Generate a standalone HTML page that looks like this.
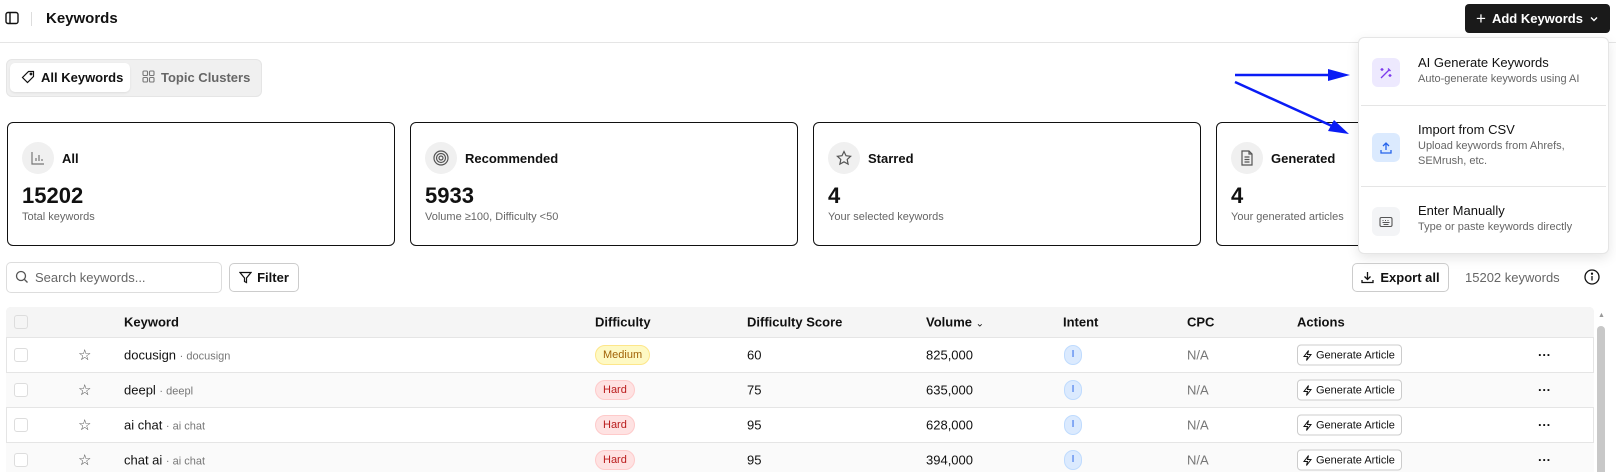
<!DOCTYPE html>
<html style="width:1616px;height:472px;overflow:hidden"><head><meta charset="utf-8"><style>
*{box-sizing:border-box;margin:0;padding:0}
body{width:1616px;height:472px;overflow:hidden;background:#fff;font-family:"Liberation Sans",sans-serif;color:#111;position:relative}
.a{position:absolute}
.card{position:absolute;top:122px;width:388px;height:124px;border:1px solid #111;border-radius:6px;background:#fff}
.card .ic{position:absolute;left:14px;top:19px;width:32px;height:32px;border-radius:50%;background:#f0f0f0;display:flex;align-items:center;justify-content:center}
.card .t{position:absolute;left:54px;top:28px;font-size:13px;font-weight:bold}
.card .n{position:absolute;left:14px;top:60px;font-size:22px;font-weight:bold}
.card .s{position:absolute;left:14px;top:88px;font-size:11px;color:#666}
.row{position:absolute;left:6px;width:1588px;height:35px;border-bottom:1px solid #e5e5e5;font-size:13px}
.row>*{position:absolute;top:50%;transform:translateY(-50%)}
.cb{left:8px;width:14px;height:14px;border:1px solid #ddd;border-radius:3px;background:#fff}
.badge{font-size:11px;padding:3px 7px;border-radius:10px;border:1px solid}
.med{background:#fef9c3;border-color:#fde68a;color:#a16207}
.hard{background:#fee2e2;border-color:#fecaca;color:#b91c1c}
.int{width:18px;height:20px;border-radius:9px;background:#dbeafe;border:1px solid #bfdbfe;color:#2563eb;font-size:10px;text-align:center;line-height:18px}
.ga{height:21px;border:1px solid #ccc;border-radius:4px;font-size:11px;padding:0 6px 0 4px;display:flex;align-items:center;gap:3px;background:#fff}
.dd-i{position:absolute;left:13px;width:28px;height:29px;border-radius:6px;display:flex;align-items:center;justify-content:center}
.dd-t{position:absolute;left:59px;font-size:13px;font-weight:500;color:#111}
.dd-s{position:absolute;left:59px;font-size:11px;color:#666;line-height:15px}
</style></head><body>
<svg class="a" style="left:5px;top:11px" width="14" height="14" viewBox="0 0 14 14" fill="none" stroke="#111" stroke-width="1.4"><rect x="1" y="1.5" width="12" height="11" rx="2"/><line x1="5" y1="1.5" x2="5" y2="12.5"/></svg>
<div class="a" style="left:31px;top:12px;width:1px;height:14px;background:#ddd"></div>
<div class="a" style="left:46px;top:10px;font-size:15px;font-weight:bold">Keywords</div>
<div class="a" style="left:0;top:42px;width:1616px;height:1px;background:#e5e5e5"></div>
<div class="a" style="left:1465px;top:4px;width:145px;height:29px;background:#1a1a1a;border-radius:4px;color:#fff;font-size:13px;font-weight:bold;display:flex;align-items:center;justify-content:center;gap:6px">
<span style="font-size:17px;font-weight:normal">+</span>Add Keywords<svg width="10" height="10" viewBox="0 0 10 10" fill="none" stroke="#fff" stroke-width="1.4"><path d="M2 3.5l3 3 3-3"/></svg></div>
<div class="a" style="left:6px;top:59px;width:256px;height:38px;background:#f0f0f0;border:1px solid #e5e5e5;border-radius:6px"></div>
<div class="a" style="left:10px;top:63px;width:120px;height:29px;background:#fff;border-radius:5px;box-shadow:0 1px 2px rgba(0,0,0,.08)"></div>
<svg class="a" style="left:21px;top:70px" width="14" height="14" viewBox="0 0 14 14" fill="none" stroke="#111" stroke-width="1.2"><path d="M7.5 1.5h5v5l-6 6-5-5z"/><circle cx="10" cy="4" r=".8"/></svg>
<div class="a" style="left:41px;top:70px;font-size:13px;font-weight:bold">All Keywords</div>
<svg class="a" style="left:142px;top:70px" width="13" height="13" viewBox="0 0 13 13" fill="none" stroke="#777" stroke-width="1.1"><rect x="1" y="1" width="4.5" height="4.5" rx="1"/><rect x="7.5" y="1" width="4.5" height="4.5" rx="1"/><rect x="1" y="7.5" width="4.5" height="4.5" rx="1"/><rect x="7.5" y="7.5" width="4.5" height="4.5" rx="1"/></svg>
<div class="a" style="left:161px;top:70px;font-size:13px;font-weight:bold;color:#666">Topic Clusters</div>
<div class="card" style="left:7px"><div class="ic"><svg width="14" height="14" viewBox="0 0 14 14" fill="none" stroke="#777" stroke-width="1.2"><path d="M1 1v12h12M5 10V7M8 10V4M11 10V8"/></svg></div><div class="t">All</div><div class="n">15202</div><div class="s">Total keywords</div></div>
<div class="card" style="left:410px"><div class="ic"><svg width="16" height="16" viewBox="0 0 16 16" fill="none" stroke="#555" stroke-width="1.2"><circle cx="8" cy="8" r="7"/><circle cx="8" cy="8" r="4.5"/><circle cx="8" cy="8" r="2"/></svg></div><div class="t">Recommended</div><div class="n">5933</div><div class="s">Volume ≥100, Difficulty &lt;50</div></div>
<div class="card" style="left:813px"><div class="ic"><svg width="16" height="16" viewBox="0 0 16 16" fill="none" stroke="#555" stroke-width="1.2"><path d="M8 1.5l2 4.2 4.6.6-3.4 3.2.9 4.6L8 11.8l-4.1 2.3.9-4.6L1.4 6.3 6 5.7z"/></svg></div><div class="t">Starred</div><div class="n">4</div><div class="s">Your selected keywords</div></div>
<div class="card" style="left:1216px"><div class="ic"><svg width="14" height="16" viewBox="0 0 14 16" fill="none" stroke="#555" stroke-width="1.2"><path d="M2 1h7l3 3v11H2z M9 1v3h3M4.5 7h5M4.5 9.5h5M4.5 12h5"/></svg></div><div class="t">Generated</div><div class="n">4</div><div class="s">Your generated articles</div></div>
<svg class="a" style="left:0;top:0" width="1616" height="472" fill="none">
<line x1="1235" y1="75" x2="1330" y2="75" stroke="#0a1cf5" stroke-width="2.5"/><path d="M1350 75l-22-6v12z" fill="#0a1cf5"/>
<line x1="1235" y1="82" x2="1332" y2="126" stroke="#0a1cf5" stroke-width="2.5"/><path d="M1349 134l-15-14-6 11z" fill="#0a1cf5"/>
</svg>
<div class="a" style="left:1358px;top:37px;width:251px;height:217px;background:#fff;border:1px solid #e5e5e5;border-radius:6px;box-shadow:0 4px 12px rgba(0,0,0,.1)">
<div class="dd-i" style="top:20px;background:#ede9fe"><svg width="14" height="14" viewBox="0 0 14 14" fill="none" stroke="#7c3aed" stroke-width="1.3"><path d="M2 12L10 4M9 2.5l2.5 2.5M3 2v3M1.5 3.5h3M11 8v3M9.5 9.5h3"/></svg></div>
<div class="dd-t" style="top:17px">AI Generate Keywords</div>
<div class="dd-s" style="top:34px">Auto-generate keywords using AI</div>
<div class="a" style="left:2px;top:67px;width:245px;height:1px;background:#e5e5e5"></div>
<div class="dd-i" style="top:95px;background:#dbeafe"><svg width="14" height="14" viewBox="0 0 14 14" fill="none" stroke="#2563eb" stroke-width="1.3"><path d="M7 9V2M4 5l3-3 3 3M2 9v3h10V9"/></svg></div>
<div class="dd-t" style="top:84px">Import from CSV</div>
<div class="dd-s" style="top:101px">Upload keywords from Ahrefs,<br>SEMrush, etc.</div>
<div class="a" style="left:2px;top:148px;width:245px;height:1px;background:#e5e5e5"></div>
<div class="dd-i" style="top:169px;background:#f3f4f6"><svg width="14" height="12" viewBox="0 0 14 12" fill="none" stroke="#555" stroke-width="1.1"><rect x="1" y="1.5" width="12" height="9" rx="1.5"/><path d="M3.5 4.5h1M6 4.5h1M8.5 4.5h1M3.5 6.5h7M4.5 8.5h5"/></svg></div>
<div class="dd-t" style="top:165px">Enter Manually</div>
<div class="dd-s" style="top:182px">Type or paste keywords directly</div>
</div>
<div class="a" style="left:6px;top:262px;width:216px;height:31px;border:1px solid #ddd;border-radius:5px"></div>
<svg class="a" style="left:15px;top:270px" width="14" height="14" viewBox="0 0 14 14" fill="none" stroke="#555" stroke-width="1.3"><circle cx="6" cy="6" r="4.5"/><path d="M9.5 9.5l3 3"/></svg>
<div class="a" style="left:35px;top:270px;font-size:13px;color:#666">Search keywords...</div>
<div class="a" style="left:229px;top:263px;width:70px;height:29px;border:1px solid #ccc;border-radius:5px;font-size:13px;font-weight:bold;display:flex;align-items:center;justify-content:center;gap:5px"><svg width="13" height="13" viewBox="0 0 13 13" fill="none" stroke="#111" stroke-width="1.2"><path d="M1 1.5h11L7.5 7v4.5l-2-1V7z"/></svg>Filter</div>
<div class="a" style="left:1352px;top:263px;width:97px;height:29px;border:1px solid #ccc;border-radius:5px;font-size:13px;font-weight:bold;display:flex;align-items:center;justify-content:center;gap:6px"><svg width="13" height="13" viewBox="0 0 13 13" fill="none" stroke="#111" stroke-width="1.3"><path d="M6.5 1v7M3.5 5.5l3 3 3-3M1 9v2.5h11V9"/></svg>Export all</div>
<div class="a" style="left:1465px;top:270px;font-size:13px;color:#666">15202 keywords</div>
<svg class="a" style="left:1584px;top:269px" width="16" height="16" viewBox="0 0 16 16" fill="none" stroke="#111" stroke-width="1.3"><circle cx="8" cy="8" r="7"/><path d="M8 7v4.5"/><circle cx="8" cy="4.7" r=".5" fill="#111"/></svg>
<div class="a" style="left:6px;top:307px;width:1588px;height:175px;border:1px solid #e5e5e5;border-radius:5px"></div>
<div class="row" style="top:307px;height:31px;background:#f5f5f5;font-weight:bold;border-radius:5px 5px 0 0">
<div class="cb" style="background:#f5f5f5"></div>
<div style="left:118px">Keyword</div><div style="left:589px">Difficulty</div><div style="left:741px">Difficulty Score</div>
<div style="left:920px">Volume <span style="font-weight:normal;font-size:10px">⌄</span></div><div style="left:1057px">Intent</div><div style="left:1181px">CPC</div><div style="left:1291px">Actions</div></div>
<div id="rows"></div>
<div class="a" style="left:1597px;top:326px;width:8px;height:150px;background:#c8c8c8;border-radius:4px"></div>
<div class="a" style="left:1598px;top:312px;font-size:7px;color:#999">▲</div>
<script>
var d=[["docusign","docusign","Medium","med","60","825,000"],["deepl","deepl","Hard","hard","75","635,000"],["ai chat","ai chat","Hard","hard","95","628,000"],["chat ai","ai chat","Hard","hard","95","394,000"]];
var h="";d.forEach(function(r,i){h+='<div class="row" style="top:'+(338+i*35)+'px;'+(i%2?'background:#fafafa':'')+'"><div class="cb"></div><div style="left:72px;color:#444;font-size:15px">☆</div><div style="left:118px">'+r[0]+' <span style="color:#777;font-size:11px">· '+r[1]+'</span></div><div class="badge '+r[3]+'" style="left:589px">'+r[2]+'</div><div style="left:741px">'+r[4]+'</div><div style="left:920px">'+r[5]+'</div><div class="int" style="left:1058px">I</div><div style="left:1181px;color:#777">N/A</div><div class="ga" style="left:1291px"><svg width="11" height="12" viewBox="0 0 11 12" fill="none" stroke="#111" stroke-width="1"><path d="M6.5 1L2 7h3.5L4.5 11 9 5H5.5z"/></svg>Generate Article</div><div style="left:1532px;font-weight:bold;font-size:13px">···</div></div>'});
document.getElementById("rows").innerHTML=h;
</script>
</body></html>
